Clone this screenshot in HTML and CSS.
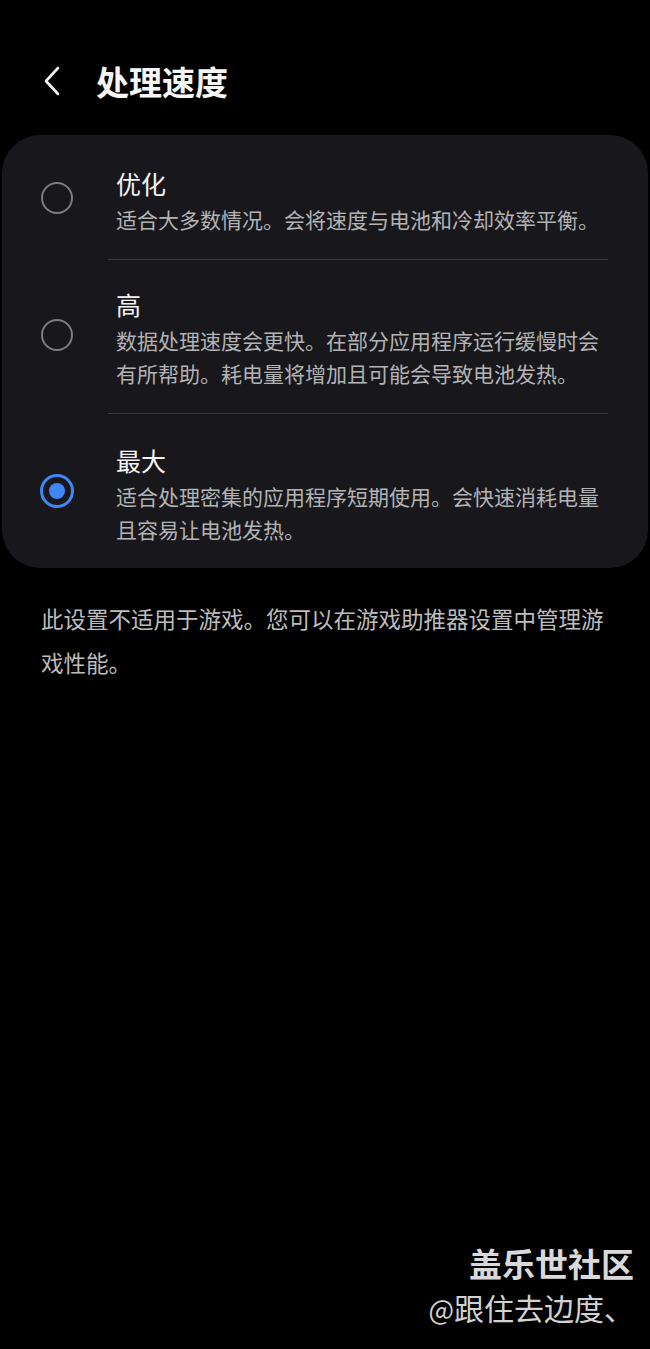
FILE: index.html
```html
<!DOCTYPE html>
<html lang="zh-CN">
<head>
<meta charset="utf-8">
<title>处理速度</title>
<link rel="stylesheet" href="styles.css">
</head>
<body>
<div class="screen">
  <header class="header">
    <svg class="back" width="22" height="32" viewBox="0 0 22 32" aria-hidden="true">
      <path d="M17 3 L5 16 L17 29" fill="none" stroke="#f2f2f2" stroke-width="2.6" stroke-linecap="round" stroke-linejoin="round"/>
    </svg>
    <h1 class="title">处理速度</h1>
  </header>

  <section class="card">
    <div class="item item-first">
      <span class="radio"></span>
      <div class="text">
        <div class="item-title">优化</div>
        <div class="item-desc">适合大多数情况。会将速度与电池和冷却效率平衡。</div>
      </div>
    </div>
    <div class="divider"></div>
    <div class="item">
      <span class="radio"></span>
      <div class="text">
        <div class="item-title">高</div>
        <div class="item-desc">数据处理速度会更快。在部分应用程序运行缓慢时会有所帮助。耗电量将增加且可能会导致电池发热。</div>
      </div>
    </div>
    <div class="divider"></div>
    <div class="item item-last">
      <span class="radio radio-on"><span class="dot"></span></span>
      <div class="text">
        <div class="item-title">最大</div>
        <div class="item-desc">适合处理密集的应用程序短期使用。会快速消耗电量且容易让电池发热。</div>
      </div>
    </div>
  </section>

  <p class="note">此设置不适用于游戏。您可以在游戏助推器设置中管理游戏性能。</p>

  <div class="watermark">
    <div class="wm-1">盖乐世社区</div>
    <div class="wm-2"><span class="at">@</span>跟住去边度、</div>
  </div>
</div>
</body>
</html>
```

FILE: styles.css
```css
html, body {
  margin: 0;
  padding: 0;
  background: #000;
}
body {
  font-family: "Noto Sans CJK SC", "Noto Sans", sans-serif;
  color: #f4f4f4;
}
.screen {
  position: relative;
  width: 650px;
  height: 1349px;
  overflow: hidden;
  background: #000;
}
.header {
  display: flex;
  align-items: center;
  height: 46px;
  padding-top: 58px;
  padding-left: 41px;
}
.back {
  display: block;
  flex: none;
}
.title {
  margin: 0 0 0 33px;
  font-size: 33px;
  font-weight: 700;
  line-height: 46px;
  color: #f6f6f6;
}
.card {
  margin: 31px 2px 0 2px;
  background: #18181c;
  border-radius: 38px;
  padding-top: 4px;
}
.item {
  display: flex;
  align-items: center;
  padding: 26px 40px 23px 39px;
}
.item-last {
  padding-top: 28px;
  padding-bottom: 22px;
}
.radio {
  flex: none;
  width: 32px;
  height: 32px;
  box-sizing: border-box;
  border: 2.5px solid #7d7d80;
  border-radius: 50%;
  margin-top: -6px;
  display: flex;
  align-items: center;
  justify-content: center;
}
.radio-on {
  width: 34px;
  height: 34px;
  border: 3.5px solid #3f86f6;
  margin-left: -1px;
  margin-right: -1px;
}
.dot {
  width: 16px;
  height: 16px;
  border-radius: 50%;
  background: #3f86f6;
}
.text {
  margin-left: 43px;
  width: 492px;
}
.item-title {
  font-size: 25px;
  line-height: 36px;
  color: #f4f4f4;
}
.item-desc {
  font-size: 21px;
  line-height: 33px;
  color: #b3b3b6;
  margin-top: 2px;
}
.divider {
  height: 1px;
  background: #39393d;
  margin: 0 40px 0 106px;
}
.note {
  margin: 28px 0 0 41px;
  width: 568px;
  font-size: 22.5px;
  line-height: 44px;
  color: #bdbdbd;
}
.watermark {
  position: absolute;
  right: 16px;
  top: 1240px;
  text-align: right;
  color: #d9d9d9;
  text-shadow: 0 0 2px rgba(0,0,0,0.6);
}
.wm-1 {
  font-size: 33px;
  font-weight: 700;
  line-height: 46px;
}
.wm-2 {
  font-size: 30px;
  line-height: 42px;
  color: #d2d2d2;
}
.at {
  font-size: 27px;
}
```
